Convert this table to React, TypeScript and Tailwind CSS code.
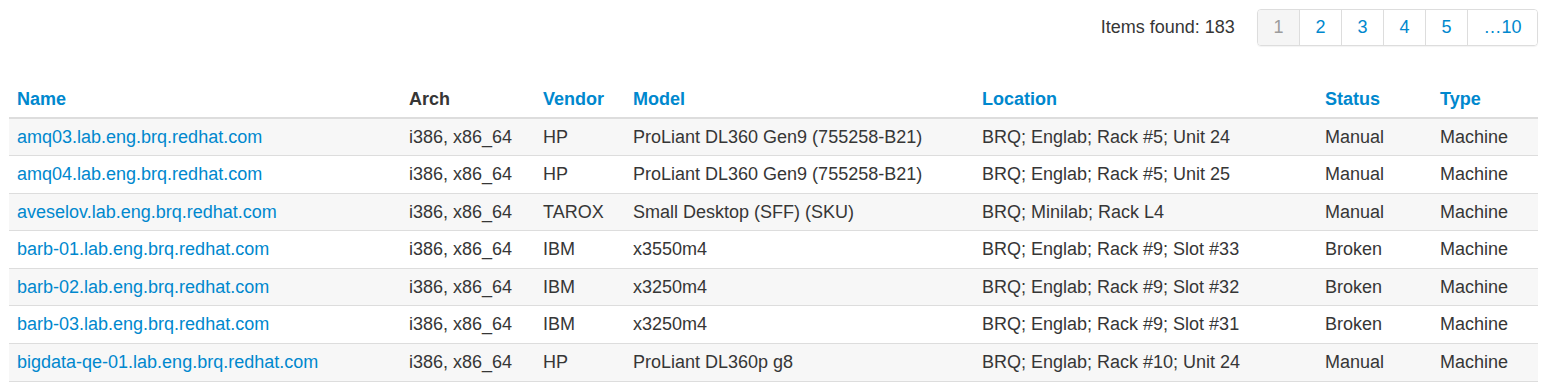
const rows = [
  ["amq03.lab.eng.brq.redhat.com", "i386, x86_64", "HP", "ProLiant DL360 Gen9 (755258-B21)", "BRQ; Englab; Rack #5; Unit 24", "Manual", "Machine"],
  ["amq04.lab.eng.brq.redhat.com", "i386, x86_64", "HP", "ProLiant DL360 Gen9 (755258-B21)", "BRQ; Englab; Rack #5; Unit 25", "Manual", "Machine"],
  ["aveselov.lab.eng.brq.redhat.com", "i386, x86_64", "TAROX", "Small Desktop (SFF) (SKU)", "BRQ; Minilab; Rack L4", "Manual", "Machine"],
  ["barb-01.lab.eng.brq.redhat.com", "i386, x86_64", "IBM", "x3550m4", "BRQ; Englab; Rack #9; Slot #33", "Broken", "Machine"],
  ["barb-02.lab.eng.brq.redhat.com", "i386, x86_64", "IBM", "x3250m4", "BRQ; Englab; Rack #9; Slot #32", "Broken", "Machine"],
  ["barb-03.lab.eng.brq.redhat.com", "i386, x86_64", "IBM", "x3250m4", "BRQ; Englab; Rack #9; Slot #31", "Broken", "Machine"],
  ["bigdata-qe-01.lab.eng.brq.redhat.com", "i386, x86_64", "HP", "ProLiant DL360p g8", "BRQ; Englab; Rack #10; Unit 24", "Manual", "Machine"],
];

const columns = [
  { label: "Name", sortable: true, width: "w-[392px]" },
  { label: "Arch", sortable: false, width: "w-[134px]" },
  { label: "Vendor", sortable: true, width: "w-[90px]" },
  { label: "Model", sortable: true, width: "w-[349px]" },
  { label: "Location", sortable: true, width: "w-[343px]" },
  { label: "Status", sortable: true, width: "w-[115px]" },
  { label: "Type", sortable: true, width: "w-[106px]" },
];

const pages = ["1", "2", "3", "4", "5", "…10"];

export default function App() {
  return (
    <div className="min-h-screen bg-white pl-[9px] pr-[10px] pt-[9px] text-[18px] leading-[20.57px] text-[#363636] font-['Liberation_Sans',Arial,sans-serif]">
      <div className="flex items-center justify-end gap-[22px]">
        <span>Items found: 183</span>
        <ul className="flex h-[37px] overflow-hidden rounded border border-[#ddd] shadow-[0_1px_1px_rgba(0,0,0,0.05)]">
          {pages.map((p, i) => (
            <li
              key={p}
              className={
                "flex items-center px-[15.5px] " +
                (i > 0 ? "border-l border-[#ddd] " : "") +
                (i === 0 ? "bg-[#f5f5f5] text-[#9c9c9c]" : "bg-white text-[#0088ce]")
              }
            >
              {p}
            </li>
          ))}
        </ul>
      </div>

      <table className="mt-[35px] w-full table-fixed border-collapse">
        <thead>
          <tr>
            {columns.map((c) => (
              <th
                key={c.label}
                className={
                  c.width +
                  " border-b-2 border-[#ddd] px-2 pt-2 pb-[7px] text-left font-bold " +
                  (c.sortable ? "text-[#0088ce]" : "text-[#363636]")
                }
              >
                {c.label}
              </th>
            ))}
          </tr>
        </thead>
        <tbody>
          {rows.map((r, i) => (
            <tr key={r[0]} className={i % 2 === 0 ? "bg-[#f7f7f7]" : "bg-white"}>
              {r.map((cell, j) => (
                <td
                  key={j}
                  className={
                    "border-b border-[#ddd] px-2 py-2 whitespace-nowrap " +
                    (j === 0 ? "text-[#0088ce]" : "")
                  }
                >
                  {cell}
                </td>
              ))}
            </tr>
          ))}
        </tbody>
      </table>
    </div>
  );
}
